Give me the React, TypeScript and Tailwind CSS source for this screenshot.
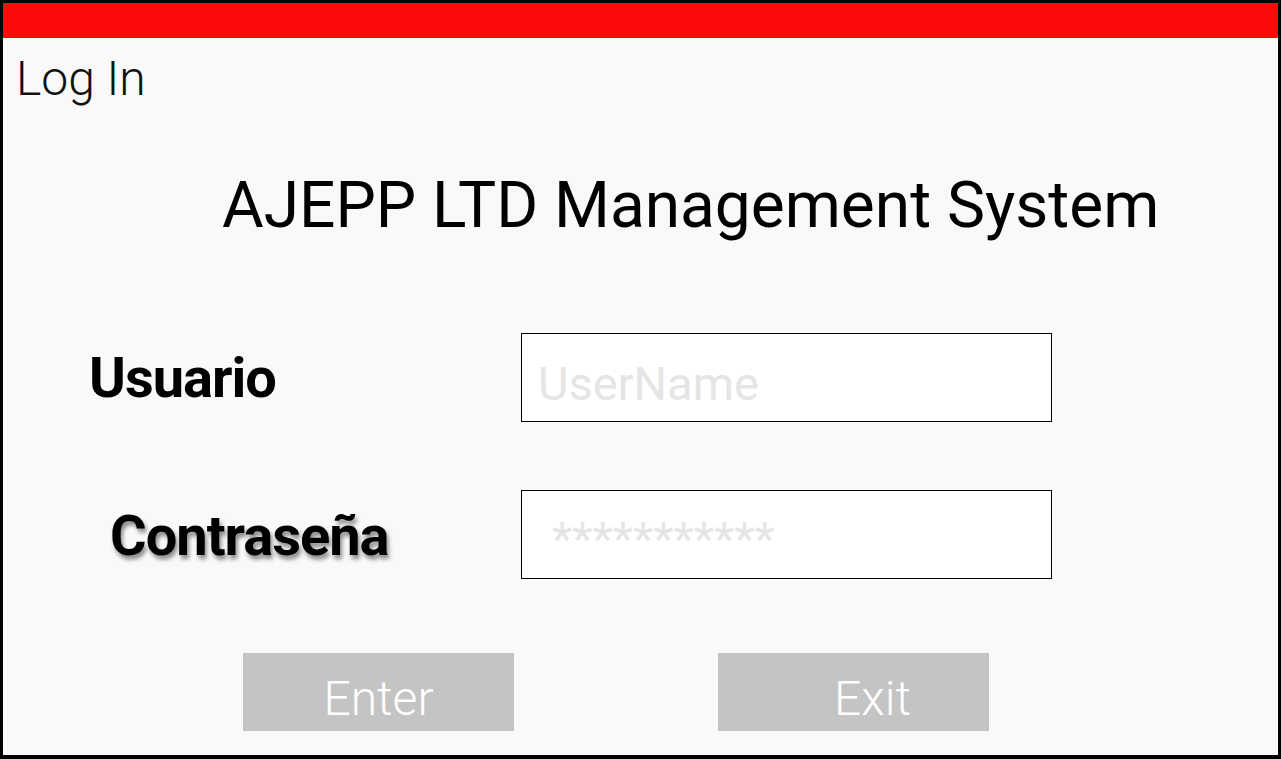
import React from "react";

export default function App() {
  return (
    <div
      className="w-[1281px] h-[759px] flex flex-col bg-[#f9f9f9] border-l-[3px] border-t-[3px] border-r-[3px] border-b-[4px] border-black overflow-hidden"
      style={{ fontFamily: "Roboto, 'Noto Sans', sans-serif" }}
    >
      <div className="h-[35px] bg-[#ff0a0a] shrink-0" />
      <div className="pl-[13px] mt-[17px] text-[48px] leading-none font-light text-[#111]">Log In</div>
      <div className="pl-[219px] mt-[71px] text-[64px] leading-none text-black">AJEPP LTD Management System</div>

      <div className="mt-[95px] flex items-center h-[89px]">
        <div className="w-[518px] pl-[86px] text-[56px] font-bold leading-none text-black tracking-[-1px]">Usuario</div>
        <div className="w-[531px] h-[89px] bg-white border border-black flex items-center pl-[16px]">
          <span className="text-[47px] text-[#e5e5e5] leading-none mt-[12px]">UserName</span>
        </div>
      </div>

      <div className="mt-[68px] flex items-center h-[89px]">
        <div
          className="w-[518px] pl-[107px] text-[56px] font-bold leading-none text-black tracking-[-1px] mt-[2px]"
          style={{ textShadow: "2px 4px 4px rgba(0,0,0,0.45)" }}
        >
          Contraseña
        </div>
        <div className="w-[531px] h-[89px] bg-white border border-black flex items-center pl-[30px]">
          <span className="text-[47px] text-[#e5e5e5] leading-none mt-[8px]">***********</span>
        </div>
      </div>

      <div className="mt-[74px] flex">
        <div className="ml-[240px] w-[271px] h-[78px] bg-[#c4c4c4] flex items-center justify-center text-white font-light text-[48px] leading-none pt-[14px]">
          Enter
        </div>
        <div className="ml-[204px] w-[271px] h-[78px] bg-[#c4c4c4] flex items-center justify-center text-white font-light text-[48px] leading-none pt-[14px] pl-[38px]">
          Exit
        </div>
      </div>
    </div>
  );
}
